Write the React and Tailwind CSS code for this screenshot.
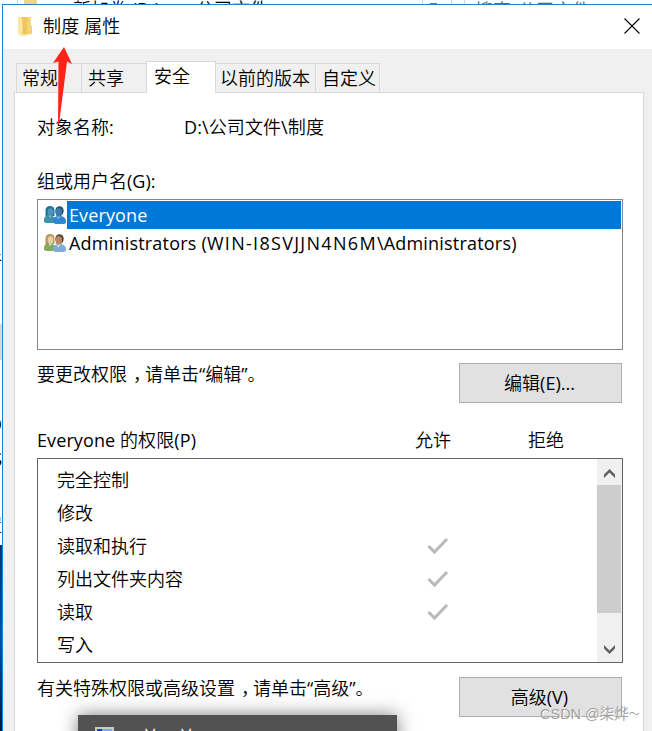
import React from "react";

const tabs = [
  { label: "常规", className: "w-[65px] border-l pl-[5px]" },
  { label: "共享", className: "w-[65px] border-l pl-[6px]" },
  { label: "安全", active: true },
  { label: "以前的版本", className: "w-[99px] pl-[4px]" },
  { label: "自定义", className: "w-[65px] border-l border-r pl-[6px]" },
];

const permissions = [
  { name: "完全控制", allow: false },
  { name: "修改", allow: false },
  { name: "读取和执行", allow: true },
  { name: "列出文件夹内容", allow: true },
  { name: "读取", allow: true },
  { name: "写入", allow: false },
];

const FolderIcon = () => (
  <svg width="15" height="21" viewBox="0 0 15 21">
    <path d="M3 1h9.500v17H4z" fill="#edc65c" />
    <path d="M9 1h3.500v8l1.500 1v8H9z" fill="#f3d47a" />
    <path d="M0 .5h1.500L4.500 3v17.500L0 18z" fill="#fce7a4" />
    <path d="M4.500 18H14l-9 2.500z" fill="#fae3a0" />
  </svg>
);

const UsersIcon = ({ selected }) => {
  const c = selected
    ? { hair: "#1f759f", face: "#4f93b5", left: "#3d94a4", right: "#2f87d8", dark: "#22516f", face2: "#3f7ba5", collar: "#7fc0e6" }
    : { hair: "#b99b58", face: "#e8cda5", left: "#82ac58", right: "#7eaddb", dark: "#514536", face2: "#bd8860", collar: "#e3eef5" };
  return (
    <svg width="22" height="18" viewBox="0 0 22 18">
      <path d="M1.500 10V4.500C1.500 1 4 0 6 0s4.500 1 4.500 4.500V10z" fill={c.hair} />
      <path d="M0 16v-2c0-3 2-5 5-5s6 2 6 5v3H2z" fill={c.left} />
      <ellipse cx="6.500" cy="6" rx="2.800" ry="3.800" fill={c.face} />
      <path d="M4.500 9.500l1.500 3 2-3z" fill={c.collar} opacity=".7" />
      <path d="M9 16v-1.500c0-3 2-4.500 6-4.500 4.500 0 7 2 7 5v2l-2 1h-9z" fill={c.right} />
      <ellipse cx="15.500" cy="5" rx="4.200" ry="4.800" fill={c.dark} />
      <ellipse cx="14.800" cy="6.500" rx="3.200" ry="4.500" fill={c.face2} />
      <path d="M12.500 10.500l1.500 3 3-3z" fill={c.collar} opacity=".8" />
    </svg>
  );
};

const CheckIcon = () => (
  <svg width="22" height="18" viewBox="0 0 22 18" fill="none">
    <path d="M1.500 9L7.500 15 20 2" stroke="#b9b9b9" strokeWidth="3" />
  </svg>
);

// Half-width comma centred in a full-width cell
const Comma = () => (
  <span className="inline-block w-[18px] pl-[6px] [font-feature-settings:'halt']">，</span>
);

const PushButton = ({ children }) => (
  <button className="h-10 w-[163px] border border-[#adadad] bg-[#e1e1e1] pr-[2px] text-center leading-[38px]">
    {children}
  </button>
);

// Slice of the explorer and desktop showing around the dialog edges
const Backdrop = () => (
  <div className="absolute inset-0 flex flex-col overflow-hidden bg-white">
    <div className="flex h-1 items-start overflow-hidden pl-[17px]">
      <div className="h-1 w-px bg-[#d5d5d5]"></div>
      <div className="ml-[6px] h-1 w-[13px] bg-[#f5d67c]"></div>
      <span className="ml-9 w-[123px] whitespace-pre leading-[19px]">新加卷 (D:)</span>
      <span className="w-[226px] leading-[19px]">公司文件</span>
      <div className="h-1 w-px bg-[#d5d5d5]"></div>
      <div className="ml-[7px] mt-[3px] h-px w-[7px] bg-[#777]"></div>
      <div className="ml-[14px] h-1 w-px bg-[#d5d5d5]"></div>
      <div className="ml-3 h-1 w-px bg-[#d5d5d5]"></div>
      <span className="ml-[10px] whitespace-nowrap leading-[21px] text-[#666]">搜索"公司文件"</span>
    </div>
    <div className="flex w-[2px] flex-1 flex-col items-end overflow-hidden">
      <span className="mt-[245px] h-[75px] w-[18px] leading-5">件</span>
      <div className="h-9 w-[2px] shrink-0 bg-[#d9d9d9]"></div>
      <span className="mt-[54px] h-[35px] leading-5">O</span>
      <span className="h-[66px] leading-5">S</span>
      <span className="h-[30px] w-[18px] leading-5">置</span>
      <div className="w-[2px] flex-1 bg-gradient-to-b from-[#06386d] via-[#0653a0] to-[#001d42]"></div>
    </div>
  </div>
);

const TitleBar = () => (
  <div className="flex h-11 items-center bg-white pb-[2px] pl-[15px] pr-3">
    <FolderIcon />
    <span className="ml-[10px] tracking-[0.150px]">制度 属性</span>
    <svg className="ml-auto" width="16" height="16" viewBox="0 0 16 16">
      <path d="M.5.5l15 15M15.500.5l-15 15" stroke="#000" strokeWidth="1.100" />
    </svg>
  </div>
);

const TabStrip = () => (
  <div className="flex h-8 items-end pl-[2px]">
    {tabs.map((tab) =>
      tab.active ? (
        <div
          key={tab.label}
          className="z-10 h-8 w-[70px] border-x border-t border-[#d9d9d9] bg-white pl-[7px] leading-[28px]"
        >
          {tab.label}
        </div>
      ) : (
        <div
          key={tab.label}
          className={`h-[30px] whitespace-nowrap border-t border-[#d9d9d9] leading-[29px] ${tab.className}`}
        >
          {tab.label}
        </div>
      )
    )}
  </div>
);

const GroupList = () => (
  <div className="mt-[6px] h-[151px] border border-[#828790] pr-px pt-px">
    <div className="flex h-7 items-center pl-[6px]">
      <UsersIcon selected />
      <span className="ml-px h-7 flex-1 bg-[#0078d7] pl-[2px] leading-7 tracking-[0.120px] text-white">Everyone</span>
    </div>
    <div className="flex h-7 items-center pl-[6px]">
      <UsersIcon />
      <span className="ml-[3px] whitespace-nowrap leading-7 tracking-[0.200px]">
        Administrators (<span className="tracking-[1.300px]">WIN-I8SVJJN4N6M</span>\Administrators)
      </span>
    </div>
  </div>
);

const ScrollBar = () => (
  <div className="flex w-[25px] flex-col items-center bg-[#f0f0f0]">
    <svg className="mt-[10px] shrink-0" width="12" height="9" viewBox="0 0 12 9">
      <path d="M0 5.500L5.500 0 11 5.500V9L5.500 3.500 0 9z" fill="#606060" />
    </svg>
    <div className="mt-[7px] h-32 w-6 shrink-0 self-start bg-[#cdcdcd]"></div>
    <svg className="mt-8 shrink-0" width="12" height="9" viewBox="0 0 12 9">
      <path d="M0 0l5.500 5.500L11 0v3.500L5.500 9 0 3.500z" fill="#606060" />
    </svg>
  </div>
);

const PermissionList = () => (
  <div className="mt-[6px] flex h-[205px] border border-[#646464]">
    <div className="flex-1 pt-1">
      {permissions.map((p) => (
        <div key={p.name} className="flex h-[33px] items-center pl-[19px]">
          <span className="w-[370px]">{p.name}</span>
          {p.allow && <CheckIcon />}
        </div>
      ))}
    </div>
    <ScrollBar />
  </div>
);

export default function App() {
  return (
    <div className="relative h-[731px] w-[652px] overflow-hidden font-['Open_Sans','Noto_Sans_CJK_SC_DemiLight','Noto_Sans_CJK_SC',sans-serif] text-[18px] leading-6 text-black">
      <Backdrop />

      <div className="relative ml-[2px] mt-1 h-[727px] border-l border-t border-[#1883d7] bg-[#f0f0f0]">
        <TitleBar />
        <div className="pl-[11px] pr-2 pt-3">
          <TabStrip />
          <div className="-mt-px h-[660px] border border-[#d9d9d9] bg-white pl-[22px] pr-[20px] pt-[22px]">
            <div className="flex">
              <span className="w-[147px]">对象名称:</span>
              <span className="tracking-[0.100px]">D:\公司文件\制度</span>
            </div>

            <div className="mt-[30px]">组或用户名(G):</div>
            <GroupList />

            <div className="mt-[13px] flex justify-between pr-px">
              <span className="-mt-px">要更改权限<Comma />请单击“编辑”。</span>
              <PushButton>编辑(E)...</PushButton>
            </div>

            <div className="mt-[25px] flex">
              <span className="w-[378px] tracking-[0.100px]">Everyone 的权限(P)</span>
              <span className="w-[113px]">允许</span>
              <span>拒绝</span>
            </div>
            <PermissionList />

            <div className="mt-[14px] flex justify-between pr-px">
              <span className="-mt-px">有关特殊权限或高级设置<Comma />请单击“高级”。</span>
              <PushButton>高级(V)</PushButton>
            </div>
          </div>
        </div>
      </div>

      {/* Arrow pointing at the title */}
      <svg className="absolute left-[52px] top-[46px]" width="22" height="80" viewBox="0 0 22 80">
        <path d="M12 1L20 18l-5-2.500L7 78l-1 0L6.500 15.500 1 17z" fill="#ff2318" />
      </svg>

      {/* Taskbar preview popping up over the dialog */}
      <div className="absolute left-[78px] top-[715px] flex h-10 w-[319px] items-start gap-[27px] bg-[#525252] pl-[17px] pt-3 shadow-[0_0_18px_rgba(0,0,0,0.5)]">
        <div className="flex h-5 w-[19px] border-2 border-[#c9c9c9] bg-[#1b35d6] pl-[5px]">
          <div className="flex-1 bg-[#7ea6ee]"></div>
        </div>
        <span className="leading-[21px] text-white">关一关</span>
      </div>

      <div className="absolute left-[540px] top-[704px] flex whitespace-nowrap font-['Liberation_Sans','Noto_Sans_CJK_SC',sans-serif] text-[14.500px] leading-5 text-[#a0a0a0] [text-shadow:1px_1px_0_#fff]">
        <span>CSDN @柒烨</span>
        <span className="text-[11px]">～</span>
      </div>
    </div>
  );
}
